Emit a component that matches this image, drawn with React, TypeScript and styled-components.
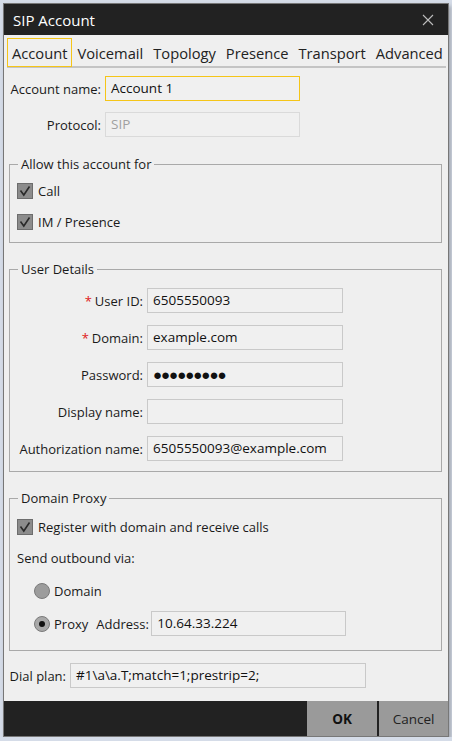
import React from "react";
import styled, { createGlobalStyle } from "styled-components";

const Global = createGlobalStyle`
  html, body {
    margin: 0;
    padding: 0;
    background: #d5dce8;
  }
  * { box-sizing: border-box; }
`;

const Window = styled.div`
  margin: 3px 0 0 3px;
  width: 446px;
  height: 734px;
  background: #efefef;
  border: 1px solid #777;
  display: flex;
  flex-direction: column;
  font-family: "Open Sans", "Noto Sans", sans-serif;
  color: #1a1a1a;
  box-shadow: 2px 3px 4px rgba(0, 0, 0, 0.25);
`;

const TitleBar = styled.div`
  height: 31px;
  background: #222222;
  color: #fff;
  display: flex;
  align-items: center;
  justify-content: space-between;
  padding: 0 14px 0 9px;
  font-size: 15px;
`;

const CloseX = styled.svg`
  width: 12px;
  height: 12px;
`;

const Tabs = styled.div`
  display: flex;
  align-items: stretch;
  margin: 3px 2px 0 3px;
  height: 30px;
  border-bottom: 2px solid #c4c4c4;
`;

const Tab = styled.div<{ $active?: boolean }>`
  font-size: 14.7px;
  padding: 0 4px;
  display: flex;
  align-items: center;
  border: 1px solid ${(p) => (p.$active ? "#f5c518" : "transparent")};
  height: 29px;
  color: #222;
`;

const Body = styled.div`
  flex: 1;
  padding: 8px 6px 0 5px;
  display: flex;
  flex-direction: column;
`;

const Row = styled.div<{ $labelWidth: number; $gap?: number }>`
  display: grid;
  grid-template-columns: ${(p) => p.$labelWidth}px auto;
  column-gap: 4px;
  align-items: center;
  margin-bottom: ${(p) => p.$gap ?? 0}px;
  font-size: 13px;
`;

const Label = styled.div`
  text-align: right;
  white-space: nowrap;
`;

const Req = styled.span`
  color: #e02020;
  margin-right: 3px;
`;

const Input = styled.div<{ $w: number; $focus?: boolean; $disabled?: boolean }>`
  width: ${(p) => p.$w}px;
  height: 25px;
  border: 1px solid ${(p) => (p.$focus ? "#f5c518" : p.$disabled ? "#dadada" : "#c9c9c9")};
  background: #f0f0f0;
  color: ${(p) => (p.$disabled ? "#a0a0a0" : "#111")};
  font-size: 13.5px;
  padding: 0 5px 2px;
  display: flex;
  align-items: center;
  white-space: nowrap;
`;

const Dots = styled.span`
  font-size: 15px;
  letter-spacing: -1px;
`;

const Group = styled.fieldset<{ $h: number; $mt: number }>`
  margin: ${(p) => p.$mt}px 0 0 0;
  padding: 0 0 0 7px;
  height: ${(p) => p.$h}px;
  border: 1px solid #a9a9a9;
  min-width: 0;
`;

const Legend = styled.legend`
  font-size: 13px;
  padding: 0 3px;
  margin-left: 1px;
`;

const CheckRow = styled.div<{ $mt: number }>`
  display: flex;
  align-items: center;
  gap: 5px;
  font-size: 13px;
  margin-top: ${(p) => p.$mt}px;
`;

const Box = styled.div`
  width: 16px;
  height: 16px;
  background: #8c8c8c;
  border: 1px solid #6d6d6d;
  display: flex;
  align-items: center;
  justify-content: center;
`;

const Radio = styled.div<{ $on?: boolean }>`
  width: 16px;
  height: 16px;
  border-radius: 50%;
  background: ${(p) => (p.$on ? "#a8a8a8" : "#9c9c9c")};
  border: 1px solid #7a7a7a;
  display: flex;
  align-items: center;
  justify-content: center;
  &::after {
    content: "";
    display: ${(p) => (p.$on ? "block" : "none")};
    width: 6px;
    height: 6px;
    border-radius: 50%;
    background: #111;
  }
`;

const RadioRow = styled.div<{ $mt: number }>`
  display: flex;
  align-items: center;
  gap: 4px;
  margin: ${(p) => p.$mt}px 0 0 17px;
  font-size: 13px;
`;

const Plain = styled.div<{ $mt: number }>`
  font-size: 13px;
  margin-top: ${(p) => p.$mt}px;
`;

const Footer = styled.div`
  height: 35px;
  background: #222222;
  display: flex;
  justify-content: flex-end;
  gap: 2px;
`;

const Btn = styled.div<{ $primary?: boolean }>`
  width: 70px;
  background: #9a9a9a;
  display: flex;
  align-items: center;
  justify-content: center;
  font-size: 13.5px;
  font-weight: ${(p) => (p.$primary ? 700 : 400)};
  color: #111;
  &:last-child {
    width: 69px;
    color: #222;
  }
`;

const Check = () => (
  <Box>
    <svg width="12" height="12" viewBox="0 0 12 12">
      <path d="M1.5 5.5 L4.8 10 L10.5 1.5" fill="none" stroke="#2a2a2a" strokeWidth="1.6" />
    </svg>
  </Box>
);

export default function App() {
  return (
    <>
      <Global />
      <Window>
        <TitleBar>
          <span>SIP Account</span>
          <CloseX viewBox="0 0 12 12">
            <path d="M1 1 L11 11 M11 1 L1 11" stroke="#bdbdbd" strokeWidth="1.1" />
          </CloseX>
        </TitleBar>
        <Tabs>
          <Tab $active>Account</Tab>
          <Tab>Voicemail</Tab>
          <Tab>Topology</Tab>
          <Tab>Presence</Tab>
          <Tab>Transport</Tab>
          <Tab>Advanced</Tab>
        </Tabs>
        <Body>
          <Row $labelWidth={92} $gap={11}>
            <Label>Account name:</Label>
            <Input $w={195} $focus>Account 1</Input>
          </Row>
          <Row $labelWidth={92}>
            <Label>Protocol:</Label>
            <Input $w={195} $disabled>SIP</Input>
          </Row>

          <Group $h={88} $mt={18}>
            <Legend>Allow this account for</Legend>
            <CheckRow $mt={9}>
              <Check />
              Call
            </CheckRow>
            <CheckRow $mt={13}>
              <Check />
              IM / Presence
            </CheckRow>
          </Group>

          <Group $h={212} $mt={17}>
            <Legend>User Details</Legend>
            <Row $labelWidth={126} $gap={12} style={{ marginTop: 10 }}>
              <Label>
                <Req>*</Req>User ID:
              </Label>
              <Input $w={196}>6505550093</Input>
            </Row>
            <Row $labelWidth={126} $gap={12}>
              <Label>
                <Req>*</Req>Domain:
              </Label>
              <Input $w={196}>example.com</Input>
            </Row>
            <Row $labelWidth={126} $gap={12}>
              <Label>Password:</Label>
              <Input $w={196}>
                <Dots>●●●●●●●●●</Dots>
              </Input>
            </Row>
            <Row $labelWidth={126} $gap={12}>
              <Label>Display name:</Label>
              <Input $w={196}></Input>
            </Row>
            <Row $labelWidth={126}>
              <Label>Authorization name:</Label>
              <Input $w={196}>6505550093@example.com</Input>
            </Row>
          </Group>

          <Group $h={162} $mt={17}>
            <Legend>Domain Proxy</Legend>
            <CheckRow $mt={11}>
              <Check />
              Register with domain and receive calls
            </CheckRow>
            <Plain $mt={13}>Send outbound via:</Plain>
            <RadioRow $mt={15}>
              <Radio />
              Domain
            </RadioRow>
            <RadioRow $mt={11}>
              <Radio $on />
              <span>Proxy</span>
              <Row $labelWidth={51} style={{ marginLeft: 4 }}>
                <Label>Address:</Label>
                <Input $w={195}>10.64.33.224</Input>
              </Row>
            </RadioRow>
          </Group>

          <Row $labelWidth={57} style={{ marginTop: 12 }}>
            <Label>Dial plan:</Label>
            <Input $w={296}>#1\a\a.T;match=1;prestrip=2;</Input>
          </Row>
        </Body>
        <Footer>
          <Btn $primary>OK</Btn>
          <Btn>Cancel</Btn>
        </Footer>
      </Window>
    </>
  );
}
